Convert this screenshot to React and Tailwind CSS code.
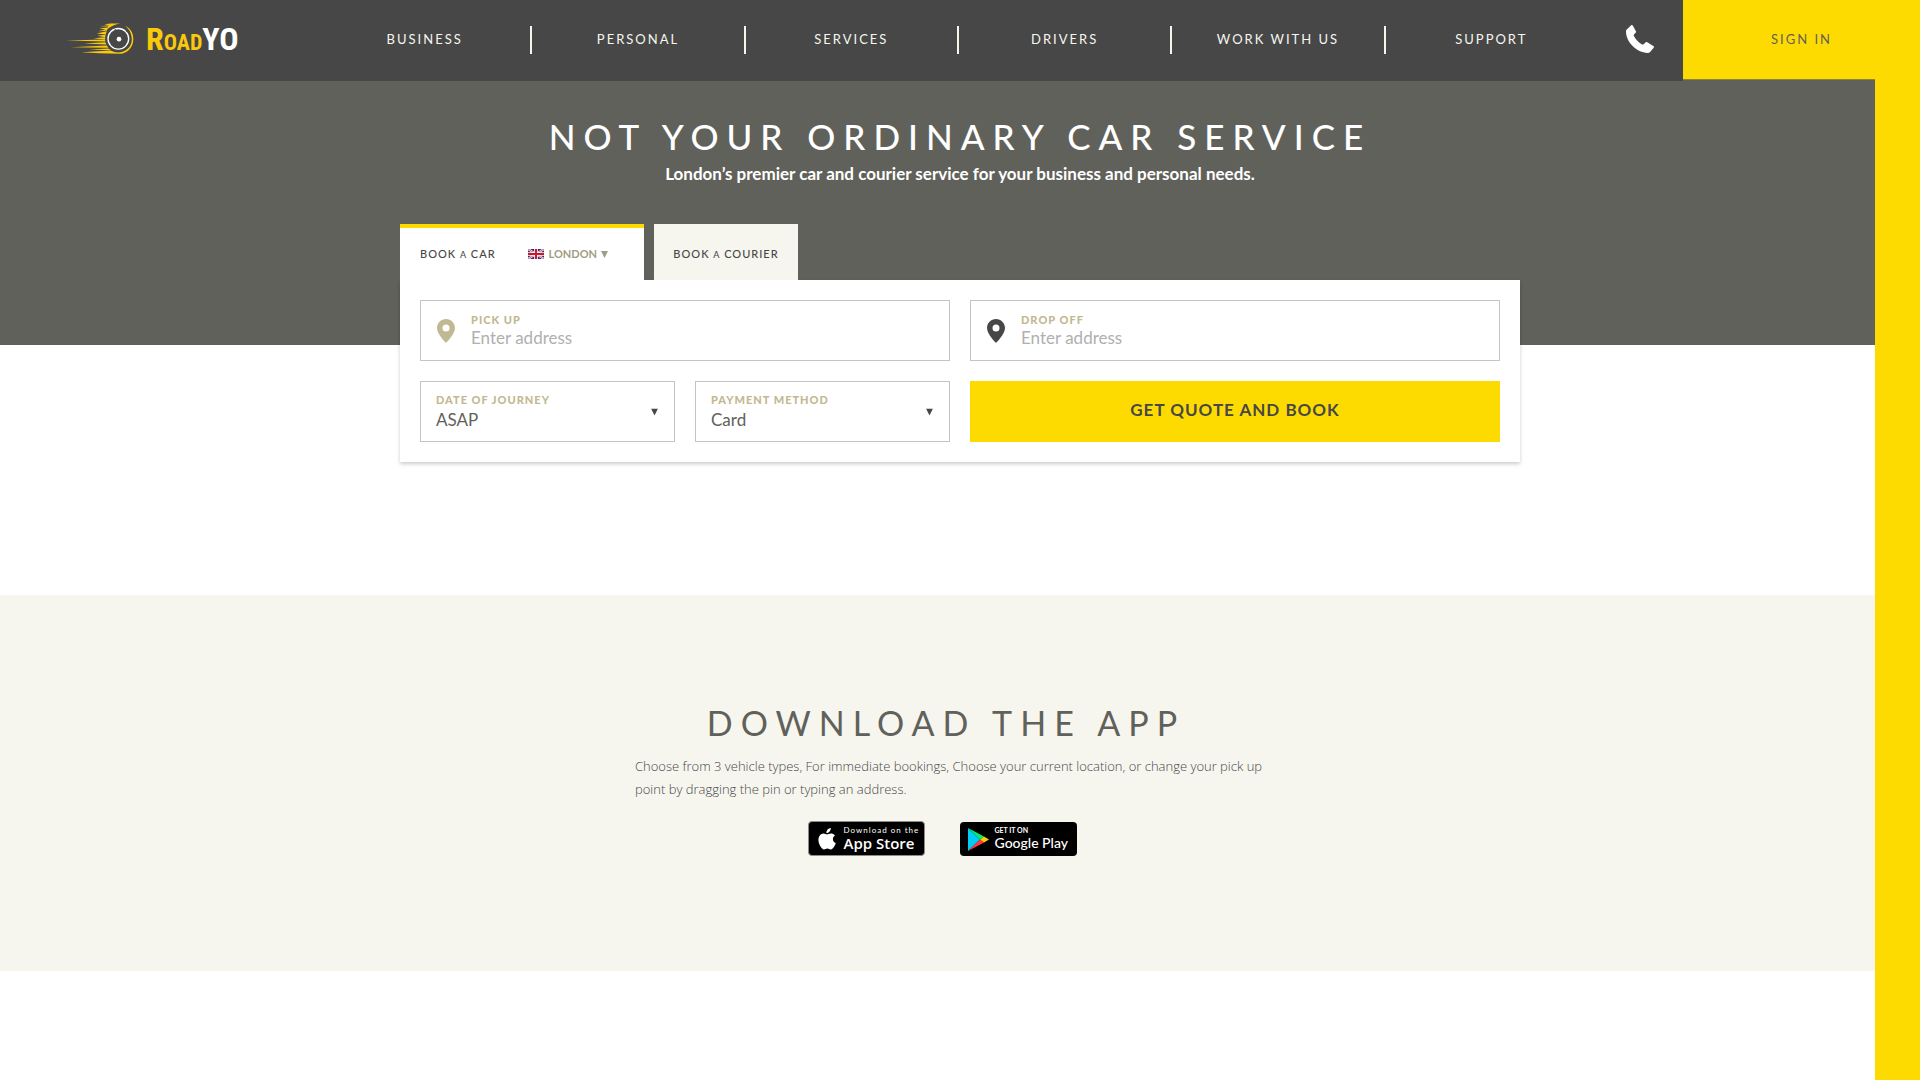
const navItems = ['BUSINESS', 'PERSONAL', 'SERVICES', 'DRIVERS', 'WORK WITH US', 'SUPPORT'];

function WheelIcon() {
  return (
    <svg viewBox="78 70 204 92" className="w-[68px] h-[31px]" aria-hidden="true">
      <g fill="#fbc90b">
        <path d="M193 73 L212 71 H243 C226 73 212 79 205 87 L204 80 L180 79 L208 76 Z" />
        <path d="M178 86 L206 82 L200 93 L174 94 L196 89 Z" />
        <path d="M170 101 L200 94 L197 104 Z" />
        <path d="M172 108 L197 105 L195 112 Z" />
        <path d="M161 115 L196 112 L195 119 Z" />
        <path d="M78 122 L195 119 L196 125 Z" />
        <path d="M132 131 L196 127 L199 134 Z" />
        <path d="M94 142 L200 137 L205 144 Z" />
        <path d="M148 149 L206 146 L212 151 Z" />
        <path d="M124 157 L212 152 C226 159 242 160 256 152 C271 143 277 128 275 113 C273 98 267 87 255 78 C270 84 280 99 280 118 C280 143 261 162 237 162 L180 160 Z" />
      </g>
      <circle cx="235" cy="117" r="31" fill="none" stroke="#fff" strokeWidth="4" />
      <path d="M224 86 L229 94 M258 95 L264 90 M211 141 L206 146" stroke="#474747" strokeWidth="3" />
      <circle cx="237" cy="118" r="7" fill="#fff" />
    </svg>
  );
}

function PhoneIcon() {
  return (
    <svg viewBox="0 0 28 28" className="size-7" fill="#fff" aria-hidden="true">
      <path d="M4.900.4C5.500-.1 6.300-.1 6.800.6L9.900 6.200C10.200 6.800 10.100 7.300 9.600 7.800L8 9.400C7.600 9.900 7.600 10.500 7.900 11.100C9.700 14.500 12.500 17.500 16 19.400C16.600 19.700 17.100 19.700 17.600 19.300L19.500 17.500C20.100 17 20.700 17 21.300 17.300L27.300 20.900C28.100 21.400 28.200 22.100 27.700 22.800L23.900 27.200C23.300 27.800 22.600 28 21.700 28C10.500 27.600.200 17.200 0 6.800C0 5.700.3 5 1 4.300Z" />
    </svg>
  );
}

function PinIcon({ className }) {
  return (
    <svg viewBox="0 0 18 24" className={`w-[18px] h-6 shrink-0 ${className}`} fill="currentColor" aria-hidden="true">
      <path
        fillRule="evenodd"
        d="M9 0C4 0 0 4 0 9c0 6.200 9 15 9 15s9-8.800 9-15c0-5-4-9-9-9Zm0 5.500a3.500 3.500 0 1 1 0 7 3.500 3.500 0 0 1 0-7Z"
      />
    </svg>
  );
}

function FlagIcon() {
  return (
    <svg viewBox="0 0 16 10" className="w-4 h-[10px]" aria-hidden="true">
      <path fill="#24327d" d="M0 0h16v10H0z" />
      <path d="M0 0l16 10M16 0L0 10" stroke="#fff" strokeWidth="2" />
      <path d="M0 0l16 10M16 0L0 10" stroke="#cf142b" strokeWidth="0.7" />
      <path d="M8 0v10M0 5h16" stroke="#fff" strokeWidth="3.600" />
      <path d="M8 0v10M0 5h16" stroke="#cf142b" strokeWidth="2" />
    </svg>
  );
}

function Triangle({ className }) {
  return (
    <svg viewBox="0 0 8 8" className={className} fill="currentColor" aria-hidden="true">
      <path d="M0 0h8L4 8z" />
    </svg>
  );
}

function Header() {
  return (
    <header className="relative z-10 flex h-[81px] bg-[#474747]">
      <a href="#" className="flex w-[319px] shrink-0 items-center pb-1 pl-[66px]">
        <WheelIcon />
        <span className="ml-3 flex items-baseline whitespace-nowrap font-['Roboto_Condensed','Liberation_Sans_Narrow','Roboto',sans-serif] text-[32px] font-bold text-[#fbc90b]">
          R<span className="text-[22px]">OAD</span>
          <span className="text-white">YO</span>
        </span>
      </a>
      <nav className="flex flex-1 items-center pb-px">
        {navItems.map((item) => (
          <a
            key={item}
            href="#"
            className="flex h-7 flex-1 items-center justify-center border-r-2 border-[#f6f6e6] text-[13px] tracking-[2px] text-[#f6f6ef] last:border-r-0"
          >
            {item}
          </a>
        ))}
      </nav>
      <a href="#" aria-label="Call us" className="flex w-[86px] shrink-0 items-center pb-1 pl-[29px]">
        <PhoneIcon />
      </a>
      <div className="w-[237px] shrink-0 bg-[#61615b]">
        <a
          href="#"
          className="flex h-20 items-center justify-center border-b border-[#8f8434] bg-[#fedb00] text-[13px] tracking-[2px] text-[#61615b]"
        >
          SIGN IN
        </a>
      </div>
    </header>
  );
}

function AddressField({ id, label, pinClass }) {
  return (
    <div className="flex h-[61px] items-center gap-4 border border-[#c4c4c4] pl-4">
      <PinIcon className={pinClass} />
      <div className="flex flex-1 flex-col pb-[2px]">
        <label htmlFor={id} className="text-[11px] leading-4 font-black tracking-[1px] text-[#c1b991]">
          {label}
        </label>
        <input
          id={id}
          type="text"
          placeholder="Enter address"
          className="h-5 w-full text-[17px] leading-5 outline-none placeholder:text-[#b0b0b0]"
        />
      </div>
    </div>
  );
}

function SelectField({ id, label, value }) {
  return (
    <div className="relative flex h-[61px] flex-col justify-center border border-[#c4c4c4] pl-[15px]">
      <label htmlFor={id} className="text-[11px] leading-4 font-black tracking-[1px] text-[#c1b991]">
        {label}
      </label>
      <select id={id} className="h-6 w-full appearance-none bg-transparent text-[17px] leading-6 text-[#61615b] outline-none">
        <option>{value}</option>
      </select>
      <Triangle className="pointer-events-none absolute top-1/2 right-4 size-[7px] -translate-y-1/2 text-[#474747]" />
    </div>
  );
}

function BookingForm() {
  return (
    <div className="mx-auto mt-9 w-full max-w-[1120px]">
      <div className="flex gap-[10px]">
        <div className="flex h-14 w-[244px] items-center border-t-4 border-[#fedb00] bg-white px-5">
          <button type="button" className="text-[11px] font-medium tracking-[1px] text-[#474747]">
            BOOK <span className="text-[9px]">A</span> CAR
          </button>
          <div className="ml-auto flex items-center gap-1 pr-4 text-[#a09e82]">
            <FlagIcon />
            <select aria-label="City" className="field-sizing-content appearance-none bg-transparent text-[11px] font-bold outline-none">
              <option>LONDON</option>
            </select>
            <Triangle className="size-[7px]" />
          </div>
        </div>
        <button type="button" className="h-14 w-36 bg-[#f6f6ef] pt-1 text-[11px] font-medium tracking-[1px] text-[#474747]">
          BOOK <span className="text-[9px]">A</span> COURIER
        </button>
      </div>
      <form
        className="grid grid-cols-2 gap-5 bg-white p-5 shadow-[0_2px_4px_rgba(0,0,0,0.2)]"
        onSubmit={(e) => e.preventDefault()}
      >
        <AddressField id="pickup" label="PICK UP" pinClass="text-[#c1b991]" />
        <AddressField id="dropoff" label="DROP OFF" pinClass="text-[#474747]" />
        <div className="grid grid-cols-2 gap-5">
          <SelectField id="date" label="DATE OF JOURNEY" value="ASAP" />
          <SelectField id="payment" label="PAYMENT METHOD" value="Card" />
        </div>
        <button type="submit" className="bg-[#fedb00] pb-1 text-[17px] font-bold tracking-[1px] text-[#474747]">
          GET QUOTE AND BOOK
        </button>
      </form>
    </div>
  );
}

function AppStoreBadge() {
  return (
    <a href="#" className="flex h-[35px] w-[117px] items-center gap-2 rounded-sm border border-[#8c8c8c] bg-black pl-[9px] text-white">
      <svg viewBox="0 0 18 22" className="h-[22px] w-[18px]" fill="currentColor" aria-hidden="true">
        <path d="M12.800 0c.1 1.400-.4 2.600-1.200 3.500-.8 1-2 1.600-3.200 1.500-.1-1.300.5-2.600 1.200-3.400C10.400.700 11.700.1 12.800 0ZM17 7.600c-1.300.8-2.100 2-2.100 3.600 0 1.800 1.100 3.200 2.900 3.900-.4 1.300-1 2.500-1.800 3.700-.9 1.300-1.800 2.600-3.200 2.600-1.400 0-1.800-.8-3.400-.8-1.600 0-2.100.8-3.400.9-1.400 0-2.400-1.400-3.300-2.700C.800 16-.600 11.300 1.300 8.200c.9-1.600 2.600-2.600 4.300-2.600 1.400 0 2.600.9 3.400.9.8 0 2.300-1.100 4-1 .7 0 2.700.3 4 2.100Z" />
      </svg>
      <span className="flex flex-col whitespace-nowrap">
        <span className="text-[8px] leading-[9px] tracking-[1px]">Download on the</span>
        <span className="font-['Open_Sans',sans-serif] text-[15px] leading-[17px] font-semibold">App Store</span>
      </span>
    </a>
  );
}

function GooglePlayBadge() {
  return (
    <a href="#" className="flex h-[34px] w-[117px] items-center gap-[6px] rounded-sm bg-black pl-2 text-white">
      <svg viewBox="0 0 21 23" className="h-[23px] w-[21px]" aria-hidden="true">
        <path fill="#00cdf7" d="M0 0v23L12 11.500z" />
        <path fill="#00ee76" d="M0 0l16 8.500-4 3z" />
        <path fill="#ff3a44" d="M0 23l12-11.500 4 3z" />
        <path fill="#ffce00" d="M16 8.500l5 3-5 3-4-3z" />
      </svg>
      <span className="flex flex-col pb-px whitespace-nowrap">
        <span className="text-[7px] leading-[9px] font-bold">GET IT ON</span>
        <span className="text-[14px] leading-4 font-medium">Google Play</span>
      </span>
    </a>
  );
}

export default function App() {
  return (
    <div className="relative min-h-screen overflow-hidden bg-white font-['Lato',sans-serif]">
      <Header />
      <main>
        <section className="h-[514px] bg-[linear-gradient(#61615b_264px,#ffffff_264px)] pt-[31px]">
          <h1 className="text-center text-[35px] leading-[48px] font-medium tracking-[8px] text-white">
            NOT YOUR ORDINARY CAR SERVICE
          </h1>
          <p className="text-center text-[17px] leading-7 font-bold text-white">
            London’s premier car and courier service for your business and personal needs.
          </p>
          <BookingForm />
        </section>
        <section className="bg-[#f6f6ef] pt-[104px] pb-[115px]">
          <div className="mx-auto max-w-[650px]">
            <h2 className="pr-7 text-center text-[34px] leading-[48px] tracking-[8px] text-[#61615b]">DOWNLOAD THE APP</h2>
            <p className="mt-2 font-['Open_Sans',sans-serif] text-[13px] leading-[23px] font-light text-[#474747]">
              Choose from 3 vehicle types, For immediate bookings, Choose your current location, or change your pick up
              point by dragging the pin or typing an address.
            </p>
            <div className="mt-5 flex items-end justify-center gap-[35px] pr-9">
              <AppStoreBadge />
              <GooglePlayBadge />
            </div>
          </div>
        </section>
      </main>
      <aside className="pointer-events-none absolute top-0 right-0 bottom-0 z-20 w-[45px] bg-[#fedb00]" />
    </div>
  );
}
